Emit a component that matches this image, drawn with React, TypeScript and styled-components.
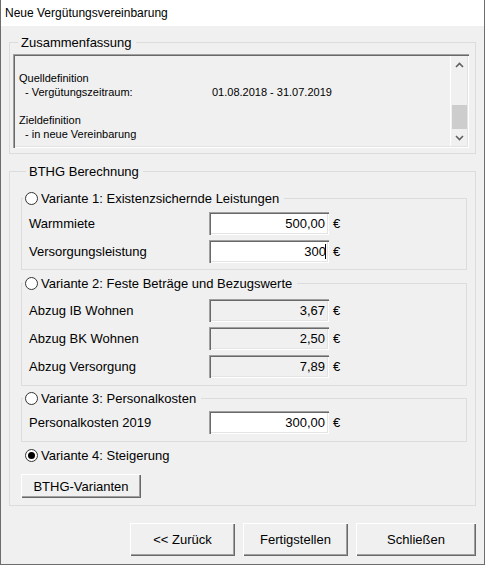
import React, { FC } from 'react';
import styled, { createGlobalStyle } from 'styled-components';

const GlobalStyle = createGlobalStyle`
  html, body {
    margin: 0;
    padding: 0;
    background: #f0f0f0;
  }
  body {
    font-family: "Liberation Sans", Arial, sans-serif;
    color: #000;
  }
`;

const Window = styled.div`
  width: 485px;
  height: 565px;
  box-sizing: border-box;
  border: 1px solid #6d6d6d;
  border-top: none;
  display: flex;
  flex-direction: column;
  background: #f0f0f0;
  overflow: hidden;
`;

const TitleBar = styled.div`
  height: 26px;
  flex: none;
  background: #fff;
  display: flex;
  align-items: center;
  padding-left: 4px;
  font-size: 12px;
`;

const Body = styled.div`
  flex: 1;
  padding: 9px 8px 0 8px;
  display: flex;
  flex-direction: column;
`;

const Group = styled.fieldset<{ $pad: string; $mt?: number }>`
  margin: ${(p) => p.$mt ?? 0}px 0 0 0;
  padding: ${(p) => p.$pad};
  border: 1px solid #dcdcdc;
  min-width: 0;
`;

const Caption = styled.legend`
  padding: 0 4px 0 3px;
  margin-left: 5px;
  font-size: 13px;
  line-height: 15px;
`;

const SubCaption = styled.legend`
  padding: 0 5px 0 2px;
  margin-left: 1px;
  font-size: 13px;
  line-height: 15px;
  display: flex;
  align-items: center;
  gap: 3px;
`;

const Summary = styled.div`
  height: 94px;
  box-sizing: border-box;
  padding: 2px;
  display: flex;
  background: #f0f0f0;
  box-shadow: inset 1px 1px #a0a0a0, inset 2px 2px #696969, inset -1px -1px #fff,
    inset -2px -2px #e3e3e3;
`;

const SummaryText = styled.div`
  flex: 1;
  padding: 1px 0 0 4px;
  font-size: 11px;
  line-height: 14px;
  display: grid;
  grid-template-columns: 193px 1fr;
  grid-auto-rows: 14px;
`;

const Indent = styled.span`
  padding-left: 6px;
`;

const ScrollBar = styled.div`
  width: 16px;
  border-left: 1px solid #fff;
  display: flex;
  flex-direction: column;
  background: #f0f0f0;
`;

const ScrollArrow = styled.div`
  height: 17px;
  flex: none;
  display: flex;
  align-items: center;
  justify-content: center;
  color: #606060;
`;

const Track = styled.div`
  flex: 1;
  display: flex;
  flex-direction: column;
  justify-content: flex-end;
  padding-left: 1px;
`;

const Thumb = styled.div`
  height: 24px;
  background: #cdcdcd;
`;

const Row = styled.div`
  height: 28px;
  display: flex;
  align-items: center;
  padding-left: 7px;
  font-size: 13px;
`;

const Label = styled.span`
  width: 180px;
`;

const Field = styled.div<{ $readOnly?: boolean }>`
  width: 120px;
  height: 23px;
  box-sizing: border-box;
  padding: 0 4px 0 2px;
  display: flex;
  align-items: center;
  justify-content: flex-end;
  background: ${(p) => (p.$readOnly ? '#f0f0f0' : '#fff')};
  box-shadow: inset 1px 1px #a0a0a0, inset 2px 2px #696969, inset -1px -1px #fff,
    inset -2px -2px #e3e3e3;
`;

const Caret = styled.span`
  display: inline-block;
  width: 1px;
  height: 15px;
  background: #000;
  margin-left: -1px;
  margin-right: -1px;
`;

const Unit = styled.span`
  margin-left: 4px;
`;

const RadioCircle = styled.span<{ $checked?: boolean }>`
  width: 13px;
  height: 13px;
  box-sizing: border-box;
  border-radius: 50%;
  border: 1px solid #333;
  background: #fff;
  display: inline-flex;
  align-items: center;
  justify-content: center;
  &::after {
    content: '';
    width: 7px;
    height: 7px;
    border-radius: 50%;
    background: ${(p) => (p.$checked ? '#000' : 'transparent')};
  }
`;

const RadioLine = styled.div`
  margin: 6px 0 0 4px;
  height: 15px;
  display: flex;
  align-items: center;
  gap: 3px;
  font-size: 13px;
`;

const Button = styled.button<{ $w: number; $h: number }>`
  width: ${(p) => p.$w}px;
  height: ${(p) => p.$h}px;
  flex: none;
  border: none;
  padding: 0;
  background: #f0f0f0;
  font-family: "Liberation Sans", Arial, sans-serif;
  font-size: 13px;
  color: #000;
  box-shadow: inset 1px 1px #fff, inset -1px -1px #696969, inset -2px -2px #a0a0a0;
`;

const SmallButtonWrap = styled.div`
  margin-top: 11px;
`;

const Footer = styled.div`
  margin-top: 17px;
  display: flex;
  justify-content: flex-end;
  gap: 8px;
`;

const Chevron: FC<{ down?: boolean }> = ({ down }) => (
  <svg width="9" height="6" viewBox="0 0 9 6">
    <polyline
      points={down ? '1,1 4.5,4.5 8,1' : '1,5 4.5,1.5 8,5'}
      fill="none"
      stroke="currentColor"
      strokeWidth="1.6"
    />
  </svg>
);

const Radio: FC<{ checked?: boolean; children: React.ReactNode }> = ({ checked, children }) => (
  <>
    <RadioCircle $checked={checked} />
    <span>{children}</span>
  </>
);

type Amount = { label: string; value: string; readOnly?: boolean; caret?: boolean };

const AmountRow: FC<Amount> = ({ label, value, readOnly, caret }) => (
  <Row>
    <Label>{label}</Label>
    <Field $readOnly={readOnly}>
      {value}
      {caret ? <Caret /> : null}
    </Field>
    <Unit>€</Unit>
  </Row>
);

export default function App() {
  return (
    <Window>
      <GlobalStyle />
      <TitleBar>Neue Vergütungsvereinbarung</TitleBar>
      <Body>
        <Group $pad="4px 6px 5px 3px">
          <Caption>Zusammenfassung</Caption>
          <Summary>
            <SummaryText>
              <span />
              <span />
              <span>Quelldefinition</span>
              <span />
              <Indent>- Vergütungszeitraum:</Indent>
              <span>01.08.2018 - 31.07.2019</span>
              <span />
              <span />
              <span>Zieldefinition</span>
              <span />
              <Indent>- in neue Vereinbarung</Indent>
              <span />
            </SummaryText>
            <ScrollBar>
              <ScrollArrow>
                <Chevron />
              </ScrollArrow>
              <Track>
                <Thumb />
              </Track>
              <ScrollArrow>
                <Chevron down />
              </ScrollArrow>
            </ScrollBar>
          </Summary>
        </Group>

        <Group $pad="12px 8px 7px 11px" $mt={10}>
          <Caption>BTHG Berechnung</Caption>

          <Group $pad="3px 0 4px 0">
            <SubCaption>
              <Radio>Variante 1: Existenzsichernde Leistungen</Radio>
            </SubCaption>
            <AmountRow label="Warmmiete" value="500,00" />
            <AmountRow label="Versorgungsleistung" value="300" caret />
          </Group>

          <Group $pad="5px 0 5px 0" $mt={6}>
            <SubCaption>
              <Radio>Variante 2: Feste Beträge und Bezugswerte</Radio>
            </SubCaption>
            <AmountRow label="Abzug IB Wohnen" value="3,67" readOnly />
            <AmountRow label="Abzug BK Wohnen" value="2,50" readOnly />
            <AmountRow label="Abzug Versorgung" value="7,89" readOnly />
          </Group>

          <Group $pad="2px 0 5px 0" $mt={5}>
            <SubCaption>
              <Radio>Variante 3: Personalkosten</Radio>
            </SubCaption>
            <AmountRow label="Personalkosten 2019" value="300,00" />
          </Group>

          <RadioLine>
            <Radio checked>Variante 4: Steigerung</Radio>
          </RadioLine>

          <SmallButtonWrap>
            <Button $w={120} $h={24}>BTHG-Varianten</Button>
          </SmallButtonWrap>
        </Group>

        <Footer>
          <Button $w={105} $h={33}>&lt;&lt; Zurück</Button>
          <Button $w={105} $h={33}>Fertigstellen</Button>
          <Button $w={120} $h={33}>Schließen</Button>
        </Footer>
      </Body>
    </Window>
  );
}
